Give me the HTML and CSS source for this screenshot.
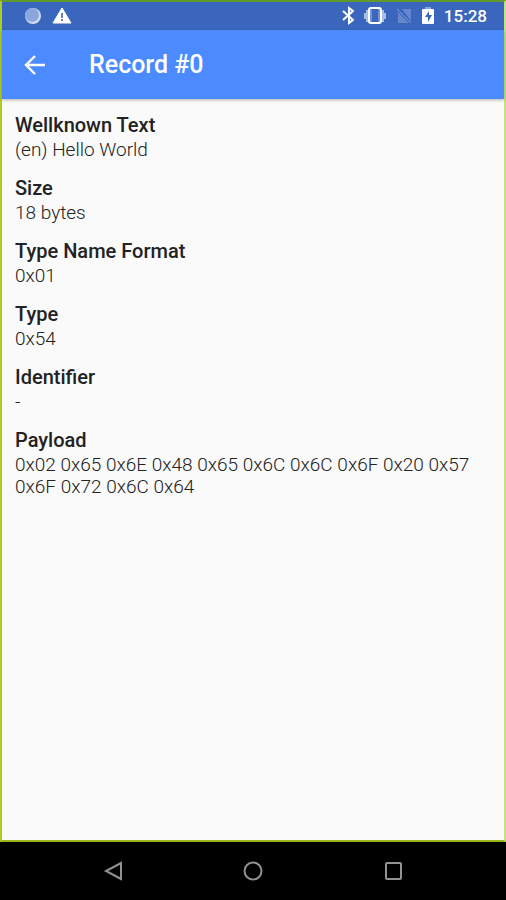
FILE: index.html
```
<!DOCTYPE html>
<html lang="en">
<head>
  <meta charset="UTF-8" />
  <meta name="viewport" content="width=device-width, initial-scale=1.0"/>
  <title>Record #0</title>
  <link rel="stylesheet" href="styles.css">
</head>
<body>
  <div class="screen">
    <!-- Status bar -->
    <div class="status-bar">
      <div class="status-icons">
        <svg width="20" height="20" viewBox="0 0 20 20">
          <circle cx="11" cy="10" r="8" fill="#cfdcf2"/>
          <circle cx="10" cy="9" r="7" fill="#8ba6dc"/>
        </svg>
        <svg width="20" height="20" viewBox="0 0 20 20">
          <path d="M10 2L19 17H1Z" fill="#fff" stroke="#fff" stroke-linejoin="round"/>
          <path d="M9 7h2v5H9zM9 13h2v2H9z" fill="#6c7fa8"/>
        </svg>
      </div>
      <div class="status-icons system">
        <svg width="14" height="20" viewBox="0 0 14 20">
          <path d="M3 5L13 14L9 17V2L13 5L3 14" fill="none" stroke="#fff" stroke-width="2"/>
        </svg>
        <svg width="22" height="20" viewBox="0 0 22 20">
          <path d="M4 4H2v3H0v6h2v3h2zM18 4h2v3h2v6h-2v3h-2z" fill="#a9bfe8"/>
          <rect x="5" y="2" width="12" height="15" rx="2" fill="#3a67bd" stroke="#fff" stroke-width="2"/>
          <path d="M7 3v13M15 3v13" stroke="#a9bfe8"/>
        </svg>
        <svg width="16" height="20" viewBox="0 0 16 20">
          <path d="M6 3H15V15ZM2 6L13 17H2Z" fill="#6687cd"/>
          <path d="M1 3L15 17" stroke="#7f9cd9" stroke-width="1"/>
        </svg>
        <svg width="12" height="20" viewBox="0 0 12 20">
          <path d="M3 1h6v3H3z" fill="#89a5dc"/>
          <rect x="0" y="3" width="12" height="15" rx="1" fill="#fff"/>
          <path d="M7 5L3 11h3v5l4-7H7z" fill="#3a67bd"/>
        </svg>
        <span class="clock">15:28</span>
      </div>
    </div>

    <!-- Toolbar -->
    <header class="toolbar">
      <button class="back-button" type="button" aria-label="Back">
        <svg width="24" height="24" viewBox="0 0 24 24">
          <path d="M22 12H4M12 3L3 12L12 21" fill="none" stroke="#fff" stroke-width="2.4"/>
        </svg>
      </button>
      <h1>Record #0</h1>
    </header>

    <main>
      <dl class="record">
        <div class="field">
          <dt>Wellknown Text</dt>
          <dd>(en) Hello World</dd>
        </div>
        <div class="field">
          <dt>Size</dt>
          <dd>18 bytes</dd>
        </div>
        <div class="field">
          <dt>Type Name Format</dt>
          <dd>0x01</dd>
        </div>
        <div class="field">
          <dt>Type</dt>
          <dd>0x54</dd>
        </div>
        <div class="field">
          <dt>Identifier</dt>
          <dd>-</dd>
        </div>
        <div class="field">
          <dt>Payload</dt>
          <dd>0x02 0x65 0x6E 0x48 0x65 0x6C 0x6C 0x6F 0x20 0x57 0x6F 0x72 0x6C 0x64</dd>
        </div>
      </dl>
    </main>
  </div>

  <!-- Navigation bar -->
  <nav class="nav-bar">
    <button type="button" aria-label="Back">
      <svg width="20" height="20" viewBox="0 0 20 20"><path d="M18 2V18L3 10Z"/></svg>
    </button>
    <button type="button" aria-label="Home">
      <svg width="20" height="20" viewBox="0 0 20 20"><circle cx="10" cy="10" r="8.5"/></svg>
    </button>
    <button type="button" aria-label="Overview">
      <svg width="20" height="20" viewBox="0 0 20 20"><rect x="3" y="2" width="15" height="16" rx="1"/></svg>
    </button>
  </nav>
</body>
</html>
```
FILE: styles.css
```
* {
  box-sizing: border-box;
}

body {
  display: flex;
  flex-direction: column;
  min-height: 100vh;
  margin: 0;
  font-family: Roboto, sans-serif;
  background: #000;
}

.screen {
  flex: 1;
  border: 2px solid #b0cc1f;
  border-top-color: #62992b;
  border-right-color: #c5e185;
  border-bottom-color: #98b51c;
  background: #fafafa;
}

.status-bar {
  display: flex;
  justify-content: space-between;
  height: 28px;
  padding: 0 17px 0 20px;
  background: #3a67bd;
}

.status-icons {
  display: flex;
  align-items: center;
  gap: 10px;
}

.clock {
  font-size: 17px;
  font-weight: 500;
  color: #fff;
}

.toolbar {
  display: flex;
  align-items: center;
  gap: 42px;
  height: 69px;
  padding: 0 21px;
  background: #4c8bff;
  box-shadow: 0 1px 3px rgba(0, 0, 0, 0.3);
}

button {
  display: flex;
  padding: 0;
  border: none;
  background: none;
  cursor: pointer;
}

h1 {
  margin: 0;
  font-size: 25px;
  font-weight: 500;
  color: #fff;
}

.record {
  display: flex;
  flex-direction: column;
  gap: 13px;
  margin: 0;
  padding: 12px 13px;
}

dt {
  font-size: 20px;
  font-weight: 500;
  line-height: 28px;
  color: #222;
}

dd {
  margin: 0;
  font-size: 19px;
  font-weight: 300;
  line-height: 22px;
  color: #222;
}

.nav-bar {
  display: flex;
  justify-content: center;
  gap: 120px;
  padding: 19px 0;
}

.nav-bar svg {
  fill: none;
  stroke: #929292;
  stroke-width: 2px;
}
```
